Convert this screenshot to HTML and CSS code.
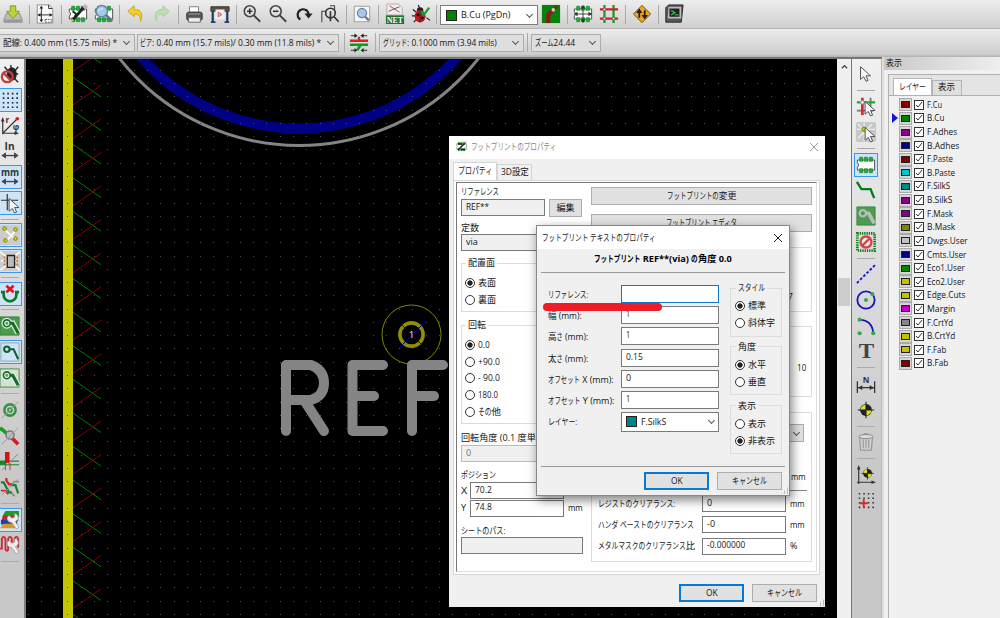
FILE: index.html
```html
<!DOCTYPE html>
<html lang="ja">
<head>
<meta charset="utf-8">
<title>Pcbnew</title>
<link rel="stylesheet" href="styles.css">
</head>
<body>
<div class="app">
  <header class="toolbar main-tools">
    <span class="tool"><svg viewBox="0 0 22 22"><path d="M4 10h14l3 7v3H1v-3z" fill="#bbb" stroke="#888"/><path d="M2 17h18v3H2z" fill="#999"/><path d="M8 2h6v6h4l-7 8-7-8h4z" fill="#b9d33c" stroke="#7c9a1c"/></svg></span>
    <i class="sep"></i>
    <span class="tool"><svg viewBox="0 0 22 22"><path d="M2.500 1h13l4 4v16h-17z" fill="#fafafa" stroke="#888"/><path d="M15 1v4h4M7 3v16M3 12h16" fill="none" stroke="#222"/><path d="M7 2l-2 3h4zM7 20l-2-3h4zM3 12l3-2v4zM19 12l-3-2v4z" fill="#222"/><path d="M11 17h7v3h-7z" fill="#fff" stroke="#555" stroke-dasharray="2 1"/></svg></span>
    <i class="sep"></i>
    <span class="tool"><svg viewBox="0 0 22 22"><use href="#chip"/><path d="M5 18L17 4" stroke="#222" stroke-width="3.200"/><path d="M16 3l3-3 3 3-3 3z" fill="#d8a0c8"/><path d="M4 16l3 2-4 2z" fill="#e8c060"/><path d="M5 8l4 3-2 4" fill="none" stroke="#222" stroke-width="2"/></svg></span>
    <span class="tool"><svg viewBox="0 0 22 22"><use href="#chip"/><circle cx="8.500" cy="8" r="6.300" fill="#a5c8e8" stroke="#5f88aa" stroke-width="1.600"/><path d="M13 12l7 7" stroke="#567893" stroke-width="3"/><path d="M5 8c1-3 4-3 5-2" stroke="#fff" fill="none"/></svg></span>
    <i class="sep"></i>
    <span class="tool"><svg viewBox="0 0 22 22"><path d="M2 8l7-6v4c8 0 10 5 7 13 0-6-2-8-7-8v3z" fill="#f4cf2a" stroke="#caa213"/></svg></span>
    <span class="tool"><svg viewBox="0 0 22 22"><path d="M19 8l-7-6v4c-8 0-10 5-7 13 0-6 2-8 7-8v3z" fill="#bfe0b0" stroke="#a3cc98"/></svg></span>
    <i class="sep"></i>
    <span class="tool"><svg viewBox="0 0 22 22"><path d="M6 3h10v6H6z" fill="#fff" stroke="#777"/><rect x="3" y="9" width="17" height="9" rx="2" fill="#555" stroke="#333"/><path d="M5 11h13" stroke="#aaa"/><path d="M5 15h13v5H5z" fill="#eee" stroke="#666"/></svg></span>
    <span class="tool"><svg viewBox="0 0 22 22"><path d="M1 3h20v5H1z" fill="#5b5142" stroke="#333"/><path d="M3 8v12M19 8v12" stroke="#233a60" stroke-width="2.400"/><path d="M1 20h5M16 20h5" stroke="#233a60" stroke-width="2"/><path d="M6 6h10v11H6z" fill="#f1eeee"/><path d="M9 9l4 2.500-4 2.500z" fill="#f8c4c4" stroke="#c44"/></svg></span>
    <i class="sep"></i>
    <span class="tool"><svg viewBox="0 0 22 22"><use href="#lens"/><path d="M5.500 8h6M8.500 5v6" stroke="#333" stroke-width="1.800"/></svg></span>
    <span class="tool"><svg viewBox="0 0 22 22"><use href="#lens"/><path d="M5.500 8h6" stroke="#333" stroke-width="1.800"/></svg></span>
    <span class="tool"><svg viewBox="0 0 22 22"><path d="M7 17a6 6 0 1 1 9-6" fill="none" stroke="#222" stroke-width="2.400"/><path d="M11.500 10.500h9L16 16z" fill="#222"/></svg></span>
    <span class="tool"><svg viewBox="0 0 22 22"><path d="M2 20V8h6M11 2h5v9" fill="none" stroke="#444" stroke-width="1.200"/><circle cx="11.500" cy="10" r="5.300" fill="#ddd" stroke="#333" stroke-width="1.800"/><path d="M11.500 8v11M15.500 14l5 5.500" stroke="#333" stroke-width="1.800"/></svg></span>
    <i class="sep"></i>
    <span class="tool"><svg viewBox="0 0 22 22"><path d="M2.500 2.500h17v17h-17z" fill="#f6f6f6" stroke="#999"/><circle cx="11" cy="10" r="5" fill="#a9c6e6" stroke="#6789b0" stroke-width="1.500"/><path d="M14.500 14l4 4" stroke="#777" stroke-width="2.500"/></svg></span>
    <i class="sep"></i>
    <span class="tool"><svg viewBox="0 0 22 22"><path d="M2 0h13l4 4v8H2z" fill="#eee" stroke="#aaa"/><path d="M5 2l11 7" stroke="#c33"/><path d="M4 8l12-5" stroke="#555"/><path d="M1 12.500h20V22H1z" fill="#207038"/><text x="2" y="20.500" textLength="18" lengthAdjust="spacingAndGlyphs" class="net">NET</text></svg></span>
    <span class="tool"><svg viewBox="0 0 22 22"><path d="M2 6l4 3M1 13h4M3 20l4-4M17 15l4 3M8 1l2 5" stroke="#222" stroke-width="1.300"/><circle cx="10" cy="7" r="3.500" fill="#222"/><ellipse cx="10" cy="13.500" rx="6" ry="6.800" fill="#bd1822"/><path d="M10 7v13" stroke="#222"/><circle cx="7.500" cy="12" r="1.500"/><circle cx="12.500" cy="15.500" r="1.500"/><path d="M11 8l3 4 6-8" fill="none" stroke="#159c2e" stroke-width="2.500"/></svg></span>
    <i class="sep"></i>
    <span class="combo layer-combo"><b class="chip-sw green"></b><span data-w="49">B.Cu (PgDn)</span><i class="chev"></i></span>
    <span class="tool wide"><svg viewBox="0 0 22 22"><path d="M1 1h20v20H1z" fill="#0a820a"/><path d="M8 21v-9l5-5" fill="none" stroke="#8b1a1a" stroke-width="4.500"/><path d="M13 7l5-5" stroke="#8b1a1a" stroke-width="2.500"/><circle cx="13.500" cy="6.500" r="2" fill="#ccc"/></svg></span>
    <i class="sep"></i>
    <span class="tool"><svg viewBox="0 0 22 22"><use href="#chip"/><path d="M2 11h18M11 2v18" stroke="#333"/><path d="M1 11l4-2.500v5zM21 11l-4-2.500v5zM11 1L8.500 5h5zM11 21l-2.500-4h5z" fill="#333"/></svg></span>
    <span class="tool"><svg viewBox="0 0 22 22"><path d="M6 1v20M16 1v20" stroke="#10a020" stroke-width="2.500"/><path d="M1 6h20M1 16h20" stroke="#c72232" stroke-width="2.500"/><g fill="#eee" stroke="#a33"><circle cx="6" cy="6" r="1.500"/><circle cx="16" cy="16" r="1.500"/><circle cx="6" cy="16" r="1.500"/></g></svg></span>
    <i class="sep"></i>
    <span class="tool"><svg viewBox="0 0 22 22"><path d="M11 1.500l9.500 9.500-9.500 9.500L1.500 11z" fill="#f0a51c" stroke="#6a4a10"/><path d="M8 15V9M14 7v6" stroke="#222" stroke-width="2"/><path d="M8 5l-3.500 5h7zM14 17l-3.500-5h7z" fill="#222"/></svg></span>
    <i class="sep"></i>
    <span class="tool"><svg viewBox="0 0 22 22"><path d="M2 4l3-3h16l-2 19H2z" fill="#555" stroke="#222"/><path d="M5 3h14v13H4z" fill="#bbb"/><path d="M6 5h11v9H6z" fill="#222"/><path d="M8 7l4 2.500L8 12M12 12h4" fill="none" stroke="#2cc04c" stroke-width="1.500"/></svg></span>
  </header>
  <div class="toolbar option-tools">
    <span class="combo track"><span data-w="114">配線: 0.400 mm (15.75 mils) *</span><i class="chev"></i></span>
    <span class="combo via"><span data-w="181">ビア: 0.40 mm (15.7 mils)/ 0.30 mm (11.8 mils) *</span><i class="chev"></i></span>
    <i class="sep"></i>
    <span class="tool wide"><svg viewBox="0 0 22 22"><path d="M1 8.500h20M11 4v5" stroke="#d22" stroke-width="2.600"/><path d="M1 13h20M13 13l-4 6" stroke="#0a9a1c" stroke-width="2.800"/><path d="M2 3h6M20 3h-6M2 19h6M20 19h-6" stroke="#222"/><path d="M9.500 3L6 .5v5zM12.500 3L16 .5v5zM9 19l-3-2.500v5zM13 19l3-2.500v5z" fill="#222"/></svg></span>
    <i class="sep"></i>
    <span class="combo grid"><span data-w="114">グリッド: 0.1000 mm (3.94 mils)</span><i class="chev"></i></span>
    <i class="sep"></i>
    <span class="combo zoom"><span data-w="40">ズーム24.44</span><i class="chev"></i></span>
  </div>

  <main class="work">
    <aside class="side left">
      <span class="vt"><svg viewBox="0 0 22 22"><path d="M5 3l4 5M20 3l-4 5M20 11h-4M20 20l-4-4M12 1v5" stroke="#222" stroke-width="1.500"/><ellipse cx="13" cy="11" rx="5.500" ry="7.500" fill="#222"/><circle cx="8" cy="14" r="6" fill="none" stroke="#bd4040" stroke-width="2.500"/><path d="M4 10l8 8" stroke="#bd4040" stroke-width="2.500"/></svg></span>
      <span class="vt on"><svg viewBox="0 0 22 22"><path d="M3 4h18M3 9h18M3 14h18M3 19h18" stroke="#223" stroke-width="1.800" stroke-dasharray="1.800 3.200"/></svg></span>
      <span class="vt"><svg viewBox="0 0 22 22"><path d="M3 20V4M3 19h16M3 19L19 3" fill="none" stroke="#333" stroke-width="1.300"/><path d="M3 1L1 6h4zM21 19l-5-2v4z" fill="#333"/><circle cx="19" cy="3" r="2" fill="#e11"/><text x="6" y="8" class="axis">r</text><text x="14" y="15" class="axis">φ</text></svg></span>
      <span class="vt"><svg viewBox="0 0 22 22"><text x="5" y="9.500" textLength="11" lengthAdjust="spacingAndGlyphs" class="unit">In</text><use href="#dbl"/></svg></span>
      <span class="vt on"><svg viewBox="0 0 22 22"><text x="1" y="9.500" textLength="20" lengthAdjust="spacingAndGlyphs" class="unit">mm</text><use href="#dbl"/></svg></span>
      <span class="vt on"><svg viewBox="0 0 22 22"><path d="M1 8h19M8 1v18" stroke="#333" stroke-width="1.300"/><use href="#cursor" x="4" y="3"/></svg></span>
      <i class="hsep"></i>
      <span class="vt on"><svg viewBox="0 0 22 22"><path d="M0 0h22v22H0z" fill="#ccc"/><path d="M4 4l14 13M18 5L6 19" stroke="#fff" stroke-width="2"/><g fill="#d3d300" stroke="#777700"><circle cx="5" cy="4" r="2"/><circle cx="17" cy="5" r="2"/><circle cx="6" cy="17" r="2"/><circle cx="17" cy="15" r="2"/></g></svg></span>
      <span class="vt on"><svg viewBox="0 0 22 22"><path d="M0 0h22v22H0z" fill="#ccc"/><path d="M0 1l8 6M22 1l-8 6M0 21l8-6M22 21l-8-6M1 11h20" stroke="#fff" stroke-width="1.500"/><path d="M8 5h8v13H8z" fill="#bbb" stroke="#222" stroke-width="1.500"/><path d="M5 6v11M19 6v11" stroke="#d27520" stroke-width="2" stroke-dasharray="2 2"/></svg></span>
      <i class="hsep"></i>
      <span class="vt on"><svg viewBox="0 0 22 22"><path d="M1 9h3v3a7 7 0 0 0 14 0V9h3" fill="none" stroke="#0c7a25" stroke-width="3"/><path d="M7 2l8 7M15 2L7 9" stroke="#e2101c" stroke-width="3"/></svg></span>
      <i class="hsep"></i>
      <span class="vt"><svg viewBox="0 0 22 22"><path d="M0 1h21v20H0z" fill="#4c9c50" stroke="#2d8032"/><use href="#zone"/></svg></span>
      <span class="vt on"><svg viewBox="0 0 22 22"><path d="M1 1h20v20H1z" fill="none" stroke="#8ba898"/><circle cx="7.500" cy="8" r="3" fill="none" stroke="#155e30" stroke-width="2.200"/><path d="M11 8h4l5 11" fill="none" stroke="#155e30" stroke-width="2.200"/></svg></span>
      <span class="vt"><svg viewBox="0 0 22 22"><path d="M0 1h21v20H0z" fill="#d5e2d3" stroke="#398a40"/><use href="#zone"/></svg></span>
      <i class="hsep"></i>
      <span class="vt"><svg viewBox="0 0 22 22"><circle cx="11" cy="11" r="6.200" fill="none" stroke="#3b9049" stroke-width="2.800"/><circle cx="11" cy="11" r="2.200" fill="none" stroke="#3b9049" stroke-width="1.800"/><path d="M2 20L20 2" stroke="#999"/></svg></span>
      <span class="vt"><svg viewBox="0 0 22 22"><path d="M0 2l10 8" stroke="#179c22" stroke-width="4"/><path d="M11 11l9 9" stroke="#db1823" stroke-width="4"/><circle cx="11" cy="10" r="4.500" fill="#bbb" stroke="#777" stroke-width="1.500"/><path d="M2 20L20 2" stroke="#999"/></svg></span>
      <span class="vt"><svg viewBox="0 0 22 22"><path d="M0 14h21M0 10h21" stroke="#278134" stroke-width="1.300"/><path d="M0 12h7" stroke="#178322" stroke-width="4"/><path d="M8 0v12" stroke="#d3131b" stroke-width="5"/><path d="M6 12v8M11 12v8" stroke="#b33"/><path d="M2 20L20 2" stroke="#888"/></svg></span>
      <span class="vt"><svg viewBox="0 0 22 22"><path d="M21 5h-5l-3 4M8 17h4l4 4" fill="none" stroke="#888" stroke-width="2"/><path d="M7 1v3l3 4h4" fill="none" stroke="#cf2630" stroke-width="2.500"/><path d="M1 6h3l6 11h3M12 9h5l3 9" fill="none" stroke="#158331" stroke-width="2.400"/><path d="M1 15h5l3 4" fill="none" stroke="#cf2630" stroke-width="2"/><path d="M2 20L20 2" stroke="#999"/></svg></span>
      <i class="hsep"></i>
      <span class="vt on"><svg viewBox="0 0 22 22"><path d="M6 1h15v7H2z" fill="#1d9a2d"/><path d="M4 6h16v6H1z" fill="#d31d2b"/><path d="M1 11h18v5H1z" fill="#223fae"/><path d="M4 15h13l3 5H0z" fill="#d49b20"/><use href="#wrench"/></svg></span>
      <span class="vt"><svg viewBox="0 0 22 22"><path d="M0 15h2V4q2-4 4 0v12q2 3 3 0V4q2-4 4 0v10M16 14V4q2-4 4 0v10" fill="none" stroke="#d02430" stroke-width="2"/><use href="#wrench"/></svg></span>
      <i class="hsep"></i>
    </aside>

    <section class="canvas">
      <svg class="board" viewBox="26 59 811 559" width="811" height="559">
        <path d="M68 59v559" stroke="#c4c400" stroke-width="10"/>
        <g id="hatch" fill="none" stroke-width="1"></g>
        <circle cx="299" cy="-82" r="210.500" fill="none" stroke="#000084" stroke-width="10"/>
        <circle cx="299" cy="-83" r="228.500" fill="none" stroke="#848484" stroke-width="3"/>
        <g id="dots" fill="#505050" shape-rendering="crispEdges"></g>
        <circle cx="411.500" cy="334.500" r="29.500" fill="none" stroke="#848400"/>
        <circle cx="411.500" cy="334.500" r="11.600" fill="none" stroke="#8f8f00" stroke-width="3.600"/>
        <path d="M399 322l26 26M425 322l-26 26" stroke="#000084"/>
        <text x="409" y="338" class="pad">1</text>
        <g fill="none" stroke="#848484" stroke-width="10" stroke-linecap="round" stroke-linejoin="round">
          <path d="M286 431v-66h25q13 5 13 18t-13 17h-25M304 400l20 31"/>
          <path d="M383 365h-30.500v66H383M352.500 396H374"/>
          <path d="M443 365h-31v66M412 396h22"/>
        </g>
      </svg>
    </section>
    <div class="scroll"><svg class="up" viewBox="0 0 8 5"><path d="M1 4.500l3-3 3 3" fill="none" stroke="#444" stroke-width="1.500"/></svg><i class="thumb"></i></div>

    <aside class="side right">
      <span class="vt"><svg viewBox="0 0 22 22"><use href="#cursor" x="-1" y="0"/></svg></span>
      <i class="hsep"></i>
      <span class="vt"><svg viewBox="0 0 22 22"><path d="M16 2v18M1 16h18" stroke="#777" stroke-width="2"/><path d="M1 7h20" stroke="#18b028" stroke-width="2.500"/><path d="M7 2v19" stroke="#e1232a" stroke-width="3"/><circle cx="7" cy="7" r="2" fill="#fff" stroke="#888"/><use href="#cursor" x="4" y="3"/></svg></span>
      <span class="vt"><svg viewBox="0 0 22 22"><rect width="22" height="22" rx="2" fill="#c7c7c7"/><path d="M2 2l14 14M18 2L2 18M1 8h20M9 1v20" stroke="#f4f4f4" stroke-width="1.300"/><circle cx="9" cy="8" r="2.500" fill="#cccc00" stroke="#777700"/><use href="#cursor" x="4" y="3"/></svg></span>
      <i class="hsep"></i>
      <span class="vt on"><svg viewBox="0 0 22 22"><use href="#chip"/></svg></span>
      <span class="vt"><svg viewBox="0 0 22 22"><path d="M1 2l5 8h10l4 10" fill="none" stroke="#087a22" stroke-width="2.600"/></svg></span>
      <span class="vt"><svg viewBox="0 0 22 22"><path d="M1 1h20v20H1z" fill="#4c9c50" stroke="#35883a"/><path d="M8 8h6l6 11" fill="none" stroke="#bbb" stroke-width="4"/><circle cx="7.500" cy="8" r="3.500" fill="#4c9c50" stroke="#bbb" stroke-width="2.500"/></svg></span>
      <span class="vt"><svg viewBox="0 0 22 22"><path d="M1.500 1.500h19v19h-19z" fill="#ddd" stroke="#168320" stroke-width="3" stroke-dasharray="1.500 1"/><circle cx="11" cy="11" r="6" fill="#eee" stroke="#d34545" stroke-width="2.600"/><path d="M7 15l8-8" stroke="#d34545" stroke-width="2.600"/></svg></span>
      <i class="hsep"></i>
      <span class="vt"><svg viewBox="0 0 22 22"><path d="M1 21L21 1" stroke="#1515c2" stroke-width="2" stroke-dasharray="3 2"/></svg></span>
      <span class="vt"><svg viewBox="0 0 22 22"><circle cx="11" cy="11" r="9.500" fill="none" stroke="#1515ba" stroke-width="2"/><g fill="#3aa653"><circle cx="11" cy="11" r="2.300"/><circle cx="18" cy="4.500" r="2.300"/></g></svg></span>
      <span class="vt"><svg viewBox="0 0 22 22"><path d="M4 4q14 1 15 15" fill="none" stroke="#1515ba" stroke-width="2"/><g fill="#3aa653"><circle cx="4" cy="4" r="2.300"/><circle cx="4" cy="19" r="2.300"/><circle cx="19" cy="19" r="2.300"/></g></svg></span>
      <span class="vt"><svg viewBox="0 0 22 22"><text x="3" y="19" textLength="17" lengthAdjust="spacingAndGlyphs" class="bigt">T</text></svg></span>
      <i class="hsep"></i>
      <span class="vt"><svg viewBox="0 0 22 22"><path d="M1.500 8v13M20.500 8v13M2 15h18" stroke="#333" stroke-width="1.400"/><path d="M2 15l5-2.500v5zM20 15l-5-2.500v5z" fill="#333"/><text x="7.500" y="10" class="unit small">N</text></svg></span>
      <span class="vt"><svg viewBox="0 0 22 22"><use href="#target"/></svg></span>
      <i class="hsep"></i>
      <span class="vt"><svg viewBox="0 0 22 22"><path d="M4 6h14l-1 14H5z" fill="#d0d0cc" stroke="#888"/><path d="M8 8v10M11 8v10M14 8v10" stroke="#999" stroke-width="1.200"/><ellipse cx="11" cy="5" rx="8" ry="2.200" fill="#ddd" stroke="#888"/><path d="M8 3q3-3 6 0" fill="none" stroke="#888"/></svg></span>
      <i class="hsep"></i>
      <span class="vt"><svg viewBox="0 0 22 22"><path d="M3 21V3M1 19h19" stroke="#333" stroke-width="1.300"/><path d="M3 0L1 5h4zM22 19l-5-2v4z" fill="#333"/><g transform="translate(4.500 1) scale(.75)"><use href="#target" width="22" height="22"/></g></svg></span>
      <span class="vt"><svg viewBox="0 0 22 22"><path d="M3 3h18M3 8h18M3 13h18M3 18h18" stroke="#333" stroke-width="1.700" stroke-dasharray="1.700 3.300"/><path d="M8.500 9v9M4 13.500h9" stroke="#e1232a" stroke-width="2"/></svg></span>
    </aside>

    <aside class="layers">
      <div class="caption"><span data-w="16">表示</span></div>
      <div class="ltabs"><span class="ltab active"><span data-w="27">レイヤー</span></span><span class="ltab"><span data-w="17">表示</span></span></div>
      <div class="lpage" id="layers"></div>
    </aside>
  </main>

  <section class="dialog footprint">
    <div class="title"><svg class="ticon" viewBox="0 0 22 22"><use href="#chip"/><path d="M4 18L19 3M4 6h8M10 17h8" fill="none" stroke="#222" stroke-width="3"/><path d="M17 4l3-3" stroke="#d8a0c8" stroke-width="4"/></svg><span class="dim" data-w="85">フットプリントのプロパティ</span><svg class="x gray" viewBox="0 0 10 10"><path d="M1 1l8 8M9 1L1 9"/></svg></div>
    <div class="tabs"><span class="tab active"><span data-w="34">プロパティ</span></span><span class="tab"><span data-w="28">3D設定</span></span></div>
    <div class="frame"><div class="page">
      <div class="col-a">
        <div class="lab"><span data-w="38">リファレンス</span></div>
        <div class="line"><span class="inp ro w84"><span data-w="23">REF**</span></span><span class="btn w33"><span data-w="18">編集</span></span></div>
        <div class="lab l2"><span data-w="18">定数</span></div>
        <span class="inp ro w122"><span data-w="12">via</span></span>
        <fieldset class="g1"><legend><span data-w="27">配置面</span></legend>
          <label class="rad on"><i></i><span data-w="18">表面</span></label><label class="rad"><i></i><span data-w="18">裏面</span></label></fieldset>
        <fieldset class="g2"><legend><span data-w="18">回転</span></legend>
          <label class="rad on"><i></i><span data-w="12">0.0</span></label><label class="rad"><i></i><span data-w="22">+90.0</span></label><label class="rad"><i></i><span data-w="22">- 90.0</span></label><label class="rad"><i></i><span data-w="20">180.0</span></label><label class="rad"><i></i><span data-w="23">その他</span></label></fieldset>
        <div class="lab l3"><span data-w="89">回転角度 (0.1 度単位):</span></div>
        <span class="inp ro w122 faint"><span data-w="5">0</span></span>
        <div class="lab l4"><span data-w="35">ポジション</span></div>
        <div class="xy"><span class="ax" data-w="6">X</span><span class="inp w94"><span data-w="17">70.2</span></span></div>
        <div class="xy"><span class="ax" data-w="5">Y</span><span class="inp w94"><span data-w="17">74.8</span></span><span class="mm" data-w="15">mm</span></div>
        <div class="lab l5"><span data-w="44">シートのパス:</span></div>
        <span class="inp ro w122"></span>
      </div>
      <div class="col-b">
        <span class="btn full"><span data-w="70">フットプリントの変更</span></span>
        <span class="btn full second"><span data-w="71">フットプリント エディタ</span></span>
        <div class="box b1"><span>7</span></div>
        <div class="box b2"><span data-w="9">10</span></div>
        <div class="box b3">
          <div class="bcombo"><i class="chev"></i></div>
          <div class="bmm"><span data-w="15">mm</span></div>
          <div class="rule"></div>
          <div class="crow"><span class="cl"><span data-w="77">レジストのクリアランス:</span></span><span class="inp w84"><span data-w="5">0</span></span><span class="cm" data-w="15">mm</span></div>
          <div class="crow"><span class="cl"><span data-w="96">ハンダ ペーストのクリアランス</span></span><span class="inp w84"><span data-w="8">-0</span></span><span class="cm" data-w="15">mm</span></div>
          <div class="crow"><span class="cl"><span data-w="97">メタルマスクのクリアランス比</span></span><span class="inp w84"><span data-w="38">-0.000000</span></span><span class="cm" data-w="7">%</span></div>
        </div>
      </div>
    </div></div>
    <div class="buttons"><span class="btn ok"><span data-w="12">OK</span></span><span class="btn cancel"><span data-w="35">キャンセル</span></span></div>
    <i class="grip"></i>
  </section>

  <section class="dialog text-props">
    <div class="title"><span data-w="114">フットプリント テキストのプロパティ</span><svg class="x" viewBox="0 0 10 10"><path d="M1 1l8 8M9 1L1 9"/></svg></div>
    <div class="heading"><span data-w="138">フットプリント REF**(via) の角度 0.0</span></div>
    <div class="tbody">
      <div class="rows">
        <div class="row"><span class="rl"><span data-w="40">リファレンス:</span></span><span class="inp focus"></span></div>
        <div class="row"><span class="rl"><span data-w="34">幅 (mm):</span></span><span class="inp"><span data-w="4">1</span></span></div>
        <div class="row"><span class="rl"><span data-w="40">高さ (mm):</span></span><span class="inp"><span data-w="4">1</span></span></div>
        <div class="row"><span class="rl"><span data-w="40">太さ (mm):</span></span><span class="inp"><span data-w="17">0.15</span></span></div>
        <div class="row"><span class="rl"><span data-w="66">オフセット X (mm):</span></span><span class="inp"><span data-w="5">0</span></span></div>
        <div class="row"><span class="rl"><span data-w="66">オフセット Y (mm):</span></span><span class="inp"><span data-w="4">1</span></span></div>
        <div class="row"><span class="rl"><span data-w="29">レイヤー:</span></span><span class="inp pick"><b class="chip-sw teal"></b><span data-w="25">F.SilkS</span><i class="chev"></i></span></div>
      </div>
      <div class="opts">
        <fieldset><legend><span data-w="27">スタイル</span></legend><label class="rad on"><i></i><span data-w="18">標準</span></label><label class="rad"><i></i><span data-w="27">斜体字</span></label></fieldset>
        <fieldset><legend><span data-w="18">角度</span></legend><label class="rad on"><i></i><span data-w="18">水平</span></label><label class="rad"><i></i><span data-w="18">垂直</span></label></fieldset>
        <fieldset><legend><span data-w="18">表示</span></legend><label class="rad"><i></i><span data-w="18">表示</span></label><label class="rad on"><i></i><span data-w="27">非表示</span></label></fieldset>
      </div>
    </div>
    <div class="buttons"><span class="btn ok"><span data-w="12">OK</span></span><span class="btn cancel"><span data-w="35">キャンセル</span></span></div>
    <i class="grip"></i>
    <i class="marker"></i>
  </section>
</div>

<svg class="defs" width="0" height="0">
  <symbol id="chip" viewBox="0 0 22 22"><path d="M1.500 5.500h19v11h-19v-3q3-2.500 0-5z" fill="#fff" stroke="#444"/><path d="M4 2.500h3.500V7H4zM9.300 2.500h3.500V7H9.300zM14.600 2.500h3.500V7h-3.500zM4 15h3.500v4.500H4zM9.300 15h3.500v4.500H9.300zM14.600 15h3.500v4.500h-3.500z" fill="#17b52e" stroke="#157124" stroke-width=".6"/></symbol>
  <symbol id="lens" viewBox="0 0 22 22"><circle cx="8.500" cy="8" r="6" fill="none" stroke="#444" stroke-width="1.700"/><path d="M13 12.500l7 7" stroke="#444" stroke-width="2.200"/></symbol>
  <symbol id="dbl" viewBox="0 0 22 22"><path d="M3 16h16" stroke="#445" stroke-width="1.500"/><path d="M1.500 16l5-3.500v7zM20.500 16l-5-3.500v7z" fill="#445"/></symbol>
  <symbol id="cursor" viewBox="0 0 22 22" width="22" height="22"><path d="M6 3v14l3.500-3 2.500 5 2.300-1-2.300-5h5z" fill="#f5f5f5" stroke="#555" stroke-width="1.100"/></symbol>
  <symbol id="zone" viewBox="0 0 22 22"><g fill="none"><path d="M8 8h6l6 11" stroke="#e5efe5" stroke-width="6"/><circle cx="7.500" cy="8" r="5.300" fill="#176b28" stroke="#e5efe5" stroke-width="1.300"/><path d="M8 8h6l6 11" stroke="#176b28" stroke-width="3.400"/><circle cx="7.500" cy="8" r="2.300" fill="#5aa05e" stroke="#e5efe5" stroke-width="1.200"/></g></symbol>
  <symbol id="wrench" viewBox="0 0 22 22"><path d="M10 6l3 3 3-1V4q5 1 4 6l-3 3 4 6-3 2-5-7q-6-1-5-6z" fill="#eee" stroke="#999" stroke-width=".8"/></symbol>
  <symbol id="target" viewBox="0 0 22 22"><circle cx="11" cy="11" r="6.500" fill="#222"/><path d="M11 11V5a6 6 0 0 0-6 6zM11 11v6a6 6 0 0 0 6-6z" fill="#dede25"/><path d="M11 2v18M2 11h18" stroke="#222" stroke-width="1.200"/></symbol>
</svg>
<script src="app.js"></script>
</body>
</html>
```
FILE: styles.css
```css
* { box-sizing: border-box; }
body { margin: 0; background: #000; font: 9px/12px "Open Sans", "Noto Sans CJK JP", sans-serif; color: #151515; }
.app { position: relative; width: 1000px; height: 618px; overflow: hidden; display: flex; flex-direction: column; }
.defs { position: absolute; }
[data-w] { display: inline-block; white-space: nowrap; transform-origin: 0 50%; flex: none; }
.kana { display: inline-block; transform-origin: 0 50%; }

.toolbar { display: flex; align-items: center; flex: none; }
.main-tools { height: 29px; background: linear-gradient(#ededed, #cfcfcf); border-bottom: 1px solid #b5b5b5; }
.option-tools { height: 30px; background: linear-gradient(#ececec, #cdcdcd 90%, #b0b0b0); border-bottom: 2px solid #777; padding-bottom: 1px; }
.tool { width: 25.85px; display: flex; justify-content: center; flex: none; }
.tool svg, .vt svg { width: 20px; height: 20px; display: block; overflow: visible; flex: none; }
.sep { width: 6.55px; height: 19px; flex: none; background: linear-gradient(90deg, transparent 3px, #aaa 3px, #aaa 4px, transparent 4px); }
.combo { display: flex; align-items: center; height: 18px; border: 1px solid #adadad; background: #dedede; padding: 0 5px 0 3px; flex: none; }
.combo .chev, .pick .chev { margin-left: auto; }
.chev { width: 5px; height: 5px; border: solid #555; border-width: 0 1px 1px 0; transform: translateY(-1px) rotate(45deg); flex: none; }
.layer-combo { width: 98px; height: 20px; background: #fff; border-color: #7d7d7d; padding-left: 5px; margin-top: 2px; }
.chip-sw { width: 11px; height: 11px; border: 1px solid #222; margin-right: 4px; flex: none; }
.green { background: #008400; }
.teal { background: #008484; }
.net { font: bold 9px "Liberation Serif", serif; fill: #fff; }
.axis { font: bold 9px "Open Sans", sans-serif; fill: #333; }
.unit { font: bold 11px "Open Sans", sans-serif; fill: #333; }
.unit.small { font-size: 9px; }
.bigt { font: bold 22px "Liberation Serif", serif; fill: #444; }
.track { width: 135px; border-left: 0; }
.via { width: 202px; margin-left: 2px; padding-left: 2px; }
.via + .sep { margin-left: 2px; }
.option-tools .tool { margin-left: -1px; }
.grid { width: 145px; }
.zoom { width: 70px; margin-left: 1px; }

.work { display: flex; height: 559px; }
.side { display: flex; flex-direction: column; background: linear-gradient(#f0f0f0, #c8c8c8 75%); flex: none; }
.left { width: 26px; padding-top: 2.500px; border-right: 2px solid #808080; }
.vt { width: 24px; height: 24px; margin: .85px 0; border: 1px solid transparent; display: flex; align-items: center; justify-content: center; flex: none; }
.left .vt { margin-left: -2px; }
.on.vt { background: #cce4f8; border-color: #3b97ee; }
.hsep { height: 6.900px; flex: none; width: 18px; margin-left: 1px; background: linear-gradient(transparent 3px, #aaa 3px, #aaa 4px, transparent 4px); }
.canvas { width: 811px; flex: none; background: #000; }
.board { display: block; }
.pad { font: 9px "Open Sans", sans-serif; fill: #fff; }
.scroll { width: 14px; background: #f0f0f0; display: flex; flex-direction: column; align-items: center; }
.up { width: 7px; height: 5px; margin-top: 5px; }
.thumb { width: 12px; height: 28px; background: #cdcdcd; margin-top: 209px; }
.right { width: 31px; padding: 2px 0 0 2px; border-left: 1px solid #777; border-right: 1px solid #bbb; }
.right .hsep { margin-left: 3px; }
.layers { flex: 1; background: #f0f0f0; border-left: 2px solid #ddd; display: flex; flex-direction: column; margin-top: -2px; }
.caption { height: 13px; background: linear-gradient(90deg, #c9c9c9, #eee); padding-left: 2px; line-height: 12px; }
.ltabs { margin: 4px 0 0 4px; height: 21px; border: 1px solid #b0b0b0; border-width: 1px 0 0 1px; background: #e4e4e4; display: flex; align-items: flex-end; padding-left: 4px; }
.ltab { height: 15px; width: 30px; border: 1px solid #b5b5b5; border-bottom: 0; background: #dedede; display: flex; justify-content: center; align-items: center; padding-bottom: 2px; }
.ltab.active { width: 39px; height: 17px; background: #fff; padding-bottom: 1px; }
.lpage { flex: 1; margin-left: 4px; border: 1px solid #b0b0b0; border-width: 1px 0 0 1px; padding: 2px 0 0 3px; }
.layer { display: flex; align-items: center; height: 13.620px; }
.arrow { width: 7px; flex: none; }
.current .arrow { width: 0; border: 5px solid transparent; border-left: 6px solid #1515d8; border-right: 0; margin-right: 1px; }
.swbox { width: 13px; height: 13px; background: #d6d6d6; border: 1px solid #aaa; padding: 2px 1px; margin-right: 2px; flex: none; }
.swbox b { display: block; width: 9px; height: 7px; border: 1px solid #222; }
.check { width: 10px; height: 10px; border: 1px solid #333; background: #fff; margin-right: 3px; flex: none; }
.check svg { display: block; width: 8px; height: 8px; }

.dialog { position: absolute; display: flex; flex-direction: column; background: #f0f0f0; }
.footprint { left: 449px; top: 136px; width: 376px; height: 471px; }
.title { background: #fff; display: flex; align-items: center; flex: none; }
.footprint .title { height: 23px; padding: 0 6px 2px 7px; }
.ticon { width: 11px; height: 11px; margin-right: 4px; }
.dim { color: #888; }
.x { width: 10px; height: 10px; margin-left: auto; fill: none; stroke: #222; stroke-width: 1; }
.x.gray { stroke: #999; }
.tabs { display: flex; align-items: flex-end; height: 21px; padding-left: 4px; flex: none; }
.tab { height: 16px; width: 35px; border: 1px solid #d5d5d5; border-bottom: 0; display: flex; align-items: center; justify-content: center; padding-bottom: 1px; }
.tab.active { width: 44px; height: 18px; background: #fff; padding-bottom: 2px; }
.frame { margin: 0 5px 0 4px; height: 395px; background: #fff; border: 1px solid #d5d5d5; padding: 1px 2px 2px; flex: none; }
.page { height: 390px; border: 1px solid #777; border-right-color: #ddd; border-bottom-color: #ddd; display: flex; background: #fff; }
.col-a { width: 134px; padding: 3px 0 0 4px; display: flex; flex-direction: column; align-items: flex-start; flex: none; }
.col-b { width: 221px; padding-top: 4px; flex: none; }
.lab { height: 12px; }
.line { display: flex; gap: 4px; margin-top: 1px; }
.inp { display: flex; align-items: center; height: 17px; border: 1px solid #7a7a7a; background: #fff; padding: 0 4px 2px; flex: none; }
.inp.ro { background: #f0f0f0; }
.inp.faint { border-color: #bbb; color: #777; }
.w84 { width: 84px; } .w122 { width: 122px; } .w94 { width: 94px; }
.btn { display: flex; align-items: center; justify-content: center; height: 18px; border: 1px solid #adadad; background: #e1e1e1; flex: none; }
.w33 { width: 33px; }
.l2 { margin-top: 5px; }
fieldset { margin: 0; border: 1px solid #dcdcdc; padding: 0 0 0 3px; min-width: 0; display: block; }
legend { padding: 0 2px; margin-left: 1px; height: 12px; }
.g1 { width: 122px; height: 55px; margin-top: 6px; }
.g2 { width: 122px; height: 105px; margin-top: 7px; }
.rad { display: flex; align-items: center; height: 16.700px; }
.rad i { width: 10px; height: 10px; border: 1px solid #333; border-radius: 50%; background: #fff; margin-right: 3px; flex: none; }
.rad.on i { background: radial-gradient(circle, #222 2.300px, #fff 3px); }
.g1 .rad:nth-of-type(1), .g2 .rad:nth-of-type(1) { margin-top: 5.500px; }
.l3 { margin-top: 8px; } .l3 + .inp { margin-top: 1px; }
.l4 { margin-top: 7px; margin-bottom: 1px; }
.xy { display: flex; align-items: center; height: 17.500px; }
.xy .inp { margin-left: 3px; }
.xy + .xy .inp { margin-left: 4px; }
.mm { margin-left: 4px; }
.l5 { margin-top: 8px; }
.full { width: 221px; }
.second { margin-top: 9px; }
.box { border: 1px solid #dcdcdc; display: flex; justify-content: flex-end; align-items: center; }
.b1 { height: 65px; margin-top: 15px; padding: 34px 18px 0 0; }
.b2 { height: 71px; margin-top: 14px; padding: 12px 5px 0 0; }
.b3 { height: 150px; margin-top: 15px; display: block; padding: 11px 4px 0 6px; }
.bcombo { width: 206px; height: 18px; border: 1px solid #adadad; background: #e1e1e1; display: flex; align-items: center; justify-content: flex-end; padding-right: 4px; }
.bmm { height: 12px; margin: 29px 1px 0 0; display: flex; justify-content: flex-end; }
.rule { height: 1px; background: #888; margin: 7px 0 4px; }
.crow { display: flex; align-items: center; height: 17px; margin-bottom: 4.300px; }
.cl { width: 104px; flex: none; }
.cm { margin-left: 4px; }
.buttons { display: flex; justify-content: flex-end; gap: 8px; }
.buttons .btn { width: 65px; }
.btn.ok { border: 2px solid #0b78d2; }
.footprint .buttons { padding: 9px 8px 0 0; }
.grip { position: absolute; right: 1px; bottom: 1px; width: 7px; height: 7px; background: repeating-linear-gradient(90deg, #bbb 0 1px, transparent 1px 3px); clip-path: polygon(100% 0, 100% 100%, 0 100%); }
.text-props { left: 536px; top: 225px; width: 254px; height: 271px; border: 1px solid #888; box-shadow: 2px 4px 10px rgba(0,0,0,.5); }
.text-props .title { height: 23px; padding: 0 6px 0 5px; }
.heading { height: 24px; margin: 0 4px; border-bottom: 1px solid #999; display: flex; align-items: center; justify-content: center; font-weight: bold; color: #000; padding-bottom: 3px; flex: none; }
.tbody { display: flex; margin: 0 4px; height: 194px; border-bottom: 1px solid #999; padding: 12px 0 0 7px; justify-content: space-between; flex: none; }
.row { display: flex; align-items: center; height: 18px; margin-bottom: 3.200px; }
.rl { width: 73px; padding-top: 2px; flex: none; }
.rows .inp { width: 98px; height: 18px; }
.rows .focus { border-color: #0b78d2; }
.rows .pick { height: 20px; padding-bottom: 0; margin-top: 1px; }
.opts { width: 52px; margin-right: 3px; }
.opts fieldset { height: 54.500px; margin: -3px 0 7.400px; padding-left: 4px; }
.opts .rad:nth-of-type(1) { margin-top: 4px; }
.text-props .buttons { padding: 5px 7px 0 0; }
.marker { position: absolute; left: 6px; top: 77px; width: 119px; height: 8px; border-radius: 4px; background: #ee1c25; }
```
FILE: app.js
```js
const NS = 'http://www.w3.org/2000/svg';

// Layer manager rows: name, colour, label width
const layers = [
  ['F.Cu', '#840000', 15], ['B.Cu', '#008400', 17], ['F.Adhes', '#840084', 30],
  ['B.Adhes', '#000084', 32], ['F.Paste', '#840000', 26], ['B.Paste', '#00c2c2', 28],
  ['F.SilkS', '#008484', 23], ['B.SilkS', '#840084', 25], ['F.Mask', '#840084', 26],
  ['B.Mask', '#848400', 28], ['Dwgs.User', '#c2c2c2', 41], ['Cmts.User', '#000084', 39],
  ['Eco1.User', '#008400', 38], ['Eco2.User', '#c2c200', 38], ['Edge.Cuts', '#c2c200', 39],
  ['Margin', '#c200c2', 28], ['F.CrtYd', '#848484', 26], ['B.CrtYd', '#c2c200', 28],
  ['F.Fab', '#c2c200', 19], ['B.Fab', '#840000', 21]
];
document.getElementById('layers').innerHTML = layers.map(([name, color, w]) =>
  `<div class="layer${name === 'B.Cu' ? ' current' : ''}"><i class="arrow"></i>` +
  `<span class="swbox"><b style="background:${color}"></b></span>` +
  '<span class="check"><svg viewBox="0 0 8 8"><path d="M1 4l2 2 4-5" fill="none" stroke="#333"/></svg></span>' +
  `<span data-w="${w}">${name}</span></div>`).join('');

function add(parent, tag, attrs) {
  const el = document.createElementNS(NS, tag);
  for (const k in attrs) el.setAttribute(k, attrs[k]);
  parent.appendChild(el);
}

// Board edge hatching
const hatch = document.getElementById('hatch');
for (let y = 43.8; y < 640; y += 33.57) {
  add(hatch, 'path', { d: `M73 ${y}l28 19.500`, stroke: '#007a00' });
  add(hatch, 'path', { d: `M73 ${y + 27.5}l28 -19.500`, stroke: '#840000' });
}

// Grid points
const dots = document.getElementById('dots');
for (let x = 27.6; x < 837; x += 13.27)
  for (let y = 69.8; y < 618; y += 13.27)
    add(dots, 'rect', { x: Math.round(x), y: Math.round(y), width: 1, height: 1 });

function squeeze(el, w, natural) {
  el.style.transform = `scaleX(${w / natural})`;
  el.style.marginRight = `${w - natural + (parseFloat(getComputedStyle(el).marginRight) || 0)}px`;
}

// Narrow kana inside mixed labels, then condense each label to its column width
document.querySelectorAll('[data-w]').forEach(el => {
  const text = el.textContent;
  if (/[ぁ-んァ-ヶー]/.test(text) && /[^ぁ-んァ-ヶー:\s]/.test(text)) {
    el.innerHTML = text.replace(/[ぁ-んァ-ヶー]+/g, '<span class="kana">$&</span>');
    el.querySelectorAll('.kana').forEach(k => {
      const n = k.getBoundingClientRect().width;
      squeeze(k, n * 0.72, n);
    });
  }
  squeeze(el, Number(el.dataset.w), el.offsetWidth);
});
```
